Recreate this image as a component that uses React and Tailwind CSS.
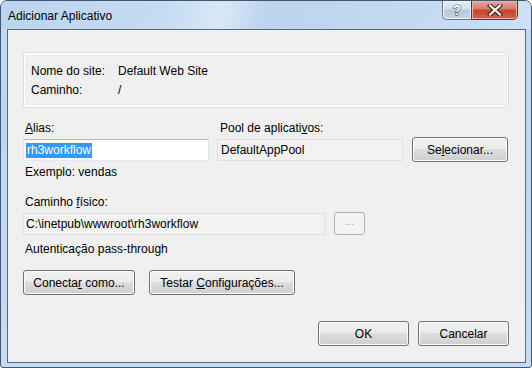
const font = "font-['Liberation_Sans',Arial,sans-serif]";

const btn =
  "flex items-center justify-center rounded-[3px] border border-[#707070] text-[12px] text-black shadow-[inset_0_0_0_1px_#fcfcfc] bg-[linear-gradient(to_bottom,#f2f2f2_0%,#ebebeb_50%,#dddddd_50%,#cfcfcf_100%)]";

function Button({ className = "", children, primary }) {
  return (
    <div
      className={`${btn} ${
        primary
          ? "border-[#3c7fb1] shadow-[inset_0_0_0_1px_#fcfcfc,inset_0_0_0_2px_#bfe6f7]"
          : ""
      } ${className}`}
    >
      <span>{children}</span>
    </div>
  );
}

export default function App() {
  return (
    <div
      className={`${font} relative w-[532px] h-[368px] overflow-hidden rounded-t-[7px] rounded-b-[3px] border border-[#44566c] bg-[linear-gradient(to_bottom,#c3daf2_0%,#bed6f0_30%,#c6dcf3_100%)] text-[12px] text-black`}
    >
      {/* title bar */}
      <div className="flex h-[28px] justify-between bg-[linear-gradient(100deg,#bcd5ef_0%,#c4dbf2_30%,#d8e8f8_42%,#bcd4ee_50%,#c2d9f1_75%,#cde0f5_100%)]">
        <div className="pl-[7px] pt-[7px] text-[12px] leading-[16px] text-black">
          Adicionar Aplicativo
        </div>
        <div className="mr-[13px] -mt-px flex h-[20px]">
          <div className="flex w-[29px] items-center justify-center rounded-bl-[5px] border border-r-0 border-[#6b7b8e] bg-[linear-gradient(to_bottom,#e4edf7_0%,#d3e0ee_45%,#b7c8dc_50%,#c7d6e6_100%)] shadow-[inset_0_0_0_1px_#eef4fa]">
            <span className="text-[14px] font-bold leading-none text-white [-webkit-text-stroke:1px_#3b4656] [paint-order:stroke_fill]">
              ?
            </span>
          </div>
          <div className="flex w-[47px] items-center justify-center rounded-br-[5px] border border-[#6b2a22] bg-[linear-gradient(to_bottom,#e6a99d_0%,#d57b6a_45%,#c7412c_50%,#d0644c_100%)] shadow-[inset_0_0_0_1px_#eeb4a8]">
            <svg width="16" height="12" viewBox="0 0 16 12">
              <path d="M3 1.5 L13 10.5 M13 1.5 L3 10.5" stroke="#4b1a14" strokeWidth="4.2" strokeLinecap="square" />
              <path d="M3 1.5 L13 10.5 M13 1.5 L3 10.5" stroke="#ffffff" strokeWidth="2.2" strokeLinecap="square" />
            </svg>
          </div>
        </div>
      </div>

      {/* client area */}
      <div className="ml-[6px] mr-[5px] h-[334px] border border-[#5a6a7e] bg-[#f0f0f0] pl-[15px] pr-[16px] pt-[22px]">
        <div className="h-[56px] w-[486px] rounded-[2px] border border-[#d5dfe5] shadow-[inset_0_0_0_1px_#ffffff] pl-[7px] pt-[9px] leading-[19px]">
          <div className="flex">
            <span className="w-[87px]">Nome do site:</span>
            <span>Default Web Site</span>
          </div>
          <div className="flex">
            <span className="w-[87px]">Caminho:</span>
            <span>/</span>
          </div>
        </div>

        <div className="mt-[12px] flex leading-[16px]">
          <div className="w-[186px]">
            <div className="pl-[2px]">
              <u>A</u>lias:
            </div>
            <div className="mt-[3px] flex h-[22px] items-center border border-[#b5b8c0] border-r-[#dbdfe6] border-b-[#e3e9ef] border-l-[#e2e3ea] bg-white pl-[2px]">
              <span className="bg-[#3399ff] px-px leading-[15px] text-white">rh3workflow</span>
            </div>
          </div>
          <div className="ml-[8px] w-[186px]">
            <div className="pl-[3px]">
              Pool de aplicati<u>v</u>os:
            </div>
            <div className="mt-[3px] flex h-[22px] items-center border border-[#dfdfdf] bg-[#f2f2f2] pl-[3px]">
              DefaultAppPool
            </div>
          </div>
          <div className="ml-[9px] flex flex-col justify-end">
            <Button className="h-[25px] w-[96px] -mb-px">
              Se<u>l</u>ecionar...
            </Button>
          </div>
        </div>

        <div className="mt-[3px] pl-[2px] leading-[16px]">Exemplo: vendas</div>

        <div className="mt-[14px] pl-[2px] leading-[16px]">
          Caminho <u>f</u>ísico:
        </div>
        <div className="mt-[2px] flex items-center">
          <div className="flex h-[22px] w-[302px] items-center border border-[#dfdfdf] bg-[#f2f2f2] pl-[2px]">
            C:\inetpub\wwwroot\rh3workflow
          </div>
          <div className="ml-[9px] flex h-[23px] w-[31px] items-center justify-center rounded-[3px] border border-[#adb2b5] bg-[#f4f4f4] pb-[4px] text-[10px] text-[#9a9a9a]">
            ...
          </div>
        </div>

        <div className="mt-[6px] pl-[2px] leading-[16px]">Autenticação pass-through</div>

        <div className="mt-[13px] flex gap-[14px]">
          <Button className="h-[25px] w-[112px]">
            Conecta<u>r</u> como...
          </Button>
          <Button className="h-[25px] w-[146px]">
            Testar <u>C</u>onfigurações...
          </Button>
        </div>

        <div className="mt-[26px] flex justify-end gap-[9px]">
          <Button primary className="h-[25px] w-[91px]">
            OK
          </Button>
          <Button className="h-[25px] w-[91px]">Cancelar</Button>
        </div>
      </div>
    </div>
  );
}
